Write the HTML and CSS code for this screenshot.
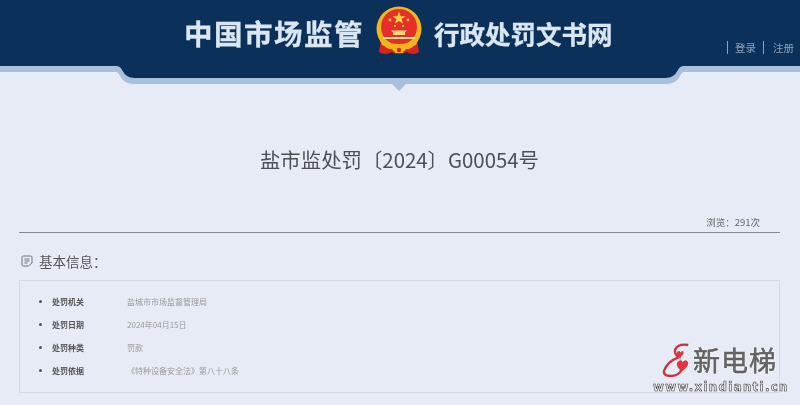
FILE: index.html
```html
<!DOCTYPE html>
<html lang="zh-CN">
<head>
<meta charset="utf-8">
<title>盐市监处罚〔2024〕G00054号</title>
<link rel="stylesheet" href="styles.css">
</head>
<body>
<header class="header">
  <svg class="header-bg" width="800" height="92" viewBox="0 0 800 92" aria-hidden="true">
    <path class="strip" d="M0 66H116Q120 66 122 70Q126 78 134 78H666Q674 78 678 70Q680 66 684 66H800V72H684Q682 72 680 76Q676 84 666 84H406L399 91L392 84H134Q124 84 120 76Q118 72 116 72H0Z"/>
    <path class="navy" d="M0 0H800V66H684Q680 66 678 70Q674 78 666 78H134Q126 78 122 70Q120 66 116 66H0Z"/>
  </svg>
  <div class="brand">
    <span class="brand-left">中国市场监管</span>
    <svg class="emblem" width="46" height="50" viewBox="0 0 46 50" aria-hidden="true">
      <path d="M5 34H41L43 46Q37 50 31 46Q23 50 15 46Q9 50 3 46Z" fill="#d8261f"/>
      <circle cx="23" cy="23" r="22.500" fill="#f3b51e"/>
      <circle cx="23" cy="21" r="18" fill="#e5302a"/>
      <path d="M23 5.500l1.700 4.700h4.900l-4 2.900 1.500 4.700-4.100-2.900-4.100 2.900 1.500-4.700-4-2.900h4.900z" fill="#f8d23c"/>
      <circle cx="14" cy="14" r="1.400" fill="#f8d23c"/><circle cx="32" cy="14" r="1.400" fill="#f8d23c"/>
      <circle cx="19" cy="20" r="1.100" fill="#f8d23c"/><circle cx="27" cy="20" r="1.100" fill="#f8d23c"/>
      <path d="M15 24.500H31L29 26.500V29H17V26.500Z" fill="#f7d778"/>
      <path d="M7 31H39V33H7Z" fill="#fbdf8a"/>
      <path d="M4 33Q23 43 42 33L40 39Q23 45 6 39Z" fill="#f3b51e"/>
      <path d="M5 40Q14 44 17 43L14 47Q8 48 4 46Z" fill="#d8261f"/>
      <path d="M41 40Q32 44 29 43L32 47Q38 48 42 46Z" fill="#d8261f"/>
      <path d="M17 41H29L27 47H19Z" fill="#f3b51e"/>
      <circle cx="23" cy="44" r="2.200" fill="#d8261f"/>
    </svg>
    <span class="brand-right">行政处罚文书网</span>
  </div>
  <nav class="auth">
    <a class="auth-link">登录</a>
    <a class="auth-link">注册</a>
  </nav>
</header>

<main class="page">
  <h1 class="doc-title">盐市监处罚〔2024〕G00054号</h1>
  <div class="views">浏览：291次</div>
  <h2 class="section-title">
    <svg class="section-icon" width="12" height="12" viewBox="0 0 12 12" aria-hidden="true">
      <path d="M7.500 11H2.500Q1 11 1 10V2Q1 1 2.500 1H9.500Q11 1 11 2V8ZM3.500 4H8.500M3.500 6H8.500M3.500 8H6.500" fill="none" stroke="#6f7580" stroke-width="1"/>
    </svg>
    基本信息：
  </h2>
  <ul class="info">
    <li class="info-row"><span class="info-key">处罚机关</span><span class="info-val">盐城市市场监督管理局</span></li>
    <li class="info-row"><span class="info-key">处罚日期</span><span class="info-val">2024年04月15日</span></li>
    <li class="info-row"><span class="info-key">处罚种类</span><span class="info-val">罚款</span></li>
    <li class="info-row"><span class="info-key">处罚依据</span><span class="info-val">《特种设备安全法》第八十八条</span></li>
  </ul>
</main>

<div class="watermark">
  <div class="wm-top">
    <svg class="wm-logo" width="30" height="34" viewBox="0 0 32 36" aria-hidden="true">
      <path d="M28 2Q17 0 14 7Q13 12 18 15Q5 20 2 30Q2 35 9 35Q18 35 21 28" fill="none" stroke="#c9353a" stroke-width="2.500"/>
      <path d="M21 28Q23 22 18 15" fill="none" stroke="#b9b9b9" stroke-width="2"/>
      <path d="M16 10Q18 7 20 10Q22 7 23 10Q23 13 18 16Q15 13 16 10Z" fill="#e0353c"/>
      <path d="M16 21Q19 16 22 20Q26 16 28 21Q28 26 21 30Q15 26 16 21Z" fill="#e5333b"/>
    </svg>
    <span class="wm-name">新电梯</span>
  </div>
  <div class="wm-url">www.xindianti.cn</div>
</div>
</body>
</html>
```
FILE: styles.css
```css
* { box-sizing: border-box; }
html, body { margin: 0; padding: 0; }
body {
  width: 800px;
  height: 405px;
  overflow: hidden;
  background: #e7ebf5;
  font-family: "Noto Sans CJK SC", "Noto Sans", sans-serif;
  position: relative;
  filter: blur(.35px);
}
.header { position: relative; height: 92px; }
.header-bg { position: absolute; top: 0; left: 0; display: block; }
.strip { fill: #a9c0dc; }
.navy { fill: #0b3059; }
.brand {
  position: relative;
  display: flex;
  align-items: center;
  padding: 8px 0 0 184px;
  height: 58px;
  color: #dbe6f3;
  font-weight: 700;
  white-space: nowrap;
}
.brand-left { font-size: 28.500px; letter-spacing: 1.500px; line-height: 40px; width: 192px; -webkit-text-stroke: .3px #dbe6f3; }
.brand-right { font-size: 25.500px; line-height: 40px; margin-left: 12px; -webkit-text-stroke: .3px #dbe6f3; }
.emblem { flex: none; margin-top: -4px; }
.auth {
  position: absolute;
  top: 41px;
  left: 727px;
  display: flex;
  font-size: 10.500px;
  line-height: 13px;
  color: #8ea1b9;
}
.auth-link { border-left: 1px solid #8ea1b9; padding-left: 7px; width: 36px; }
.auth-link + .auth-link { padding-left: 9px; }
.page { padding: 0 20px 0 19px; color: #555; }
.doc-title {
  margin: 55px 0 0;
  text-align: center;
  font-size: 20.400px;
  line-height: 24px;
  font-weight: 400;
  color: #4d4f55;
}
.views {
  margin-top: 45px;
  padding: 0 20px 3px 0;
  text-align: right;
  font-size: 9.500px;
  line-height: 13px;
  color: #666;
  border-bottom: 1px solid #85888e;
}
.section-title {
  margin: 18px 0 9px;
  padding-left: 2px;
  display: flex;
  align-items: center;
  gap: 6px;
  font-size: 13.500px;
  line-height: 20px;
  font-weight: 400;
  color: #555;
}
.section-icon { flex: none; }
.info {
  list-style: none;
  margin: 0;
  padding: 9px 0 9px 19px;
  height: 113px;
  border: 1px solid #d5d9e2;
}
.info-row {
  display: flex;
  align-items: center;
  height: 23px;
  font-size: 8px;
}
.info-row::before {
  content: "";
  width: 3px;
  height: 3px;
  border-radius: 50%;
  background: #555;
  margin-right: 10px;
}
.info-key { width: 75px; font-weight: 700; color: #555; }
.info-val { color: #999; }
.watermark {
  position: absolute;
  left: 653px;
  top: 342px;
  width: 147px;
}
.wm-top { display: flex; align-items: center; height: 36px; padding-left: 9px; }
.wm-logo { flex: none; }
.wm-name {
  margin-left: 1px;
  font-size: 27px;
  line-height: 36px;
  letter-spacing: 1px;
  font-weight: 400;
  color: #666;
  -webkit-text-stroke: .5px #555;
  text-shadow: 0 0 2px #fff, 0 0 2px #fff;
}
.wm-url {
  margin-top: 2px;
  font-family: "DejaVu Sans", sans-serif;
  font-size: 11.800px;
  line-height: 14px;
  letter-spacing: 1.300px;
  font-weight: 700;
  color: #eee;
  -webkit-text-stroke: .6px #444;
  white-space: nowrap;
}
```
